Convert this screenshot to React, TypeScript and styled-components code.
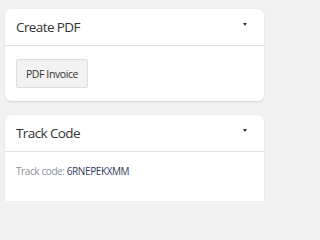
import React from 'react'
import styled, { createGlobalStyle } from 'styled-components'

const GlobalStyle = createGlobalStyle`
  html, body {
    margin: 0;
    padding: 0;
    background: #f1f1f1;
    font-family: 'Open Sans', 'Liberation Sans', sans-serif;
  }
`

const Page = styled.div`
  display: flex;
  flex-direction: column;
  gap: 14px;
  width: 269px;
  height: 201px;
  padding: 9px 5px 0;
  overflow: hidden;
  box-sizing: border-box;
`

const Card = styled.div`
  background: #ffffff;
  border-radius: 6px;
  box-shadow: 0 1px 2px rgba(0, 0, 0, 0.12);
  flex-shrink: 0;
`

const CardHeader = styled.div`
  display: flex;
  align-items: center;
  justify-content: space-between;
  height: 36px;
  padding: 0 17px 0 11px;
  border-bottom: 1px solid #e2e2e2;
`

const Title = styled.div`
  font-size: 13.5px;
  letter-spacing: -0.6px;
  color: #333333;
`

const Caret = styled.span`
  width: 0;
  height: 0;
  border-left: 2.5px solid transparent;
  border-right: 2.5px solid transparent;
  border-top: 3px solid #333333;
  margin-top: -5px;
`

const CardBody = styled.div<{ tall?: boolean }>`
  padding: ${({ tall }) => (tall ? '12px 11px 12px' : '13px 11px 13px')};
  min-height: ${({ tall }) => (tall ? '50px' : 'auto')};
`

const Button = styled.button`
  display: block;
  font-family: inherit;
  font-size: 10.5px;
  letter-spacing: -0.4px;
  color: #333333;
  background: #f2f2f2;
  border: 1px solid #dcdcdc;
  border-radius: 2px;
  height: 29px;
  width: 72px;
  padding: 0;
  cursor: pointer;
`

const Line = styled.div`
  font-size: 10px;
  letter-spacing: -0.4px;
  color: #8a8f99;
`

const Code = styled.span`
  color: #2f3d5c;
`

const Section = ({ title, children, tall }: { title: string; children: React.ReactNode; tall?: boolean }) => (
  <Card>
    <CardHeader>
      <Title>{title}</Title>
      <Caret />
    </CardHeader>
    <CardBody tall={tall}>{children}</CardBody>
  </Card>
)

export default function App() {
  return (
    <>
      <GlobalStyle />
      <Page>
        <Section title="Create PDF">
          <Button>PDF Invoice</Button>
        </Section>
        <Section title="Track Code" tall>
          <Line>
            Track code: <Code>6RNEPEKXMM</Code>
          </Line>
        </Section>
      </Page>
    </>
  )
}
